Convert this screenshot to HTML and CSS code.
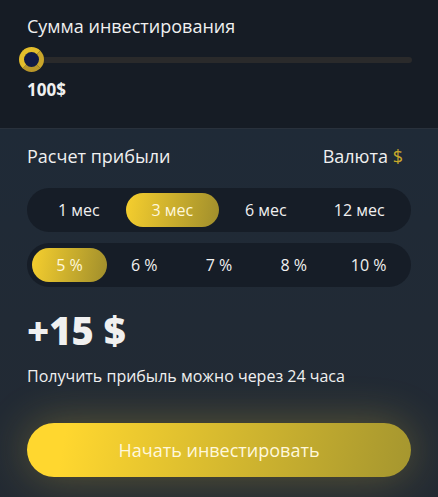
FILE: index.html
```html
<!DOCTYPE html>
<html lang="ru">
<head>
    <meta charset="UTF-8">
    <meta name="viewport" content="width=device-width, initial-scale=1.0">
    <title>Калькулятор</title>
    <link rel="stylesheet" href="styles.css">
</head>
<body>

    <!-- Сумма -->
    <div class="amount">
        <div class="amount-title">Сумма инвестирования</div>
        <div class="slider">
            <div class="slider-track"></div>
            <div class="slider-thumb"></div>
        </div>
        <div class="amount-value">100$</div>
    </div>

    <!-- Расчет -->
    <div class="calc">
        <div class="calc-head">
            <span>Расчет прибыли</span>
            <span>Валюта <span class="gold">$</span></span>
        </div>

        <div class="tabs">
            <div class="tab">1 мес</div>
            <div class="tab active">3 мес</div>
            <div class="tab">6 мес</div>
            <div class="tab">12 мес</div>
        </div>

        <div class="tabs">
            <div class="tab active">5 %</div>
            <div class="tab">6 %</div>
            <div class="tab">7 %</div>
            <div class="tab">8 %</div>
            <div class="tab">10 %</div>
        </div>

        <div class="profit">+15 $</div>
        <div class="profit-note">Получить прибыль можно через 24 часа</div>

        <button class="invest">Начать инвестировать</button>
    </div>

</body>
</html>
```

FILE: styles.css
```css
body {
    font-family: "Open Sans", Arial, sans-serif;
    background-color: #1f2935;
    color: #f0f0f0;
    margin: 0;
    padding: 0;
    width: 438px;
    height: 497px;
    overflow: hidden;
}

/* Top block */
.amount {
    background-color: #161c25;
    height: 129px;
    box-sizing: border-box;
    padding: 14px 27px 0;
    border-bottom: 1px solid #29313c;
}

.amount-title {
    font-size: 18px;
    line-height: 24px;
}

.slider {
    position: relative;
    height: 25px;
    margin: 9px 0 0 -8px;
    width: 393px;
    display: flex;
    align-items: center;
}

.slider-track {
    width: 100%;
    height: 6px;
    border-radius: 3px;
    background-color: #2a2a2b;
}

.slider-thumb {
    position: absolute;
    left: 0;
    top: 0;
    width: 15px;
    height: 15px;
    border-radius: 50%;
    border: 5px solid #e3bd2c;
    border-right-color: #c9a52a;
    border-bottom-color: #b8962a;
    background-color: #121a44;
}

.amount-value {
    font-size: 17px;
    font-weight: bold;
    line-height: 22px;
    margin-top: 7px;
}

/* Calc block */
.calc {
    padding: 15px 27px 0;
    background: linear-gradient(#1f2a37, #232a33);
    height: 368px;
}

.calc-head {
    display: flex;
    justify-content: space-between;
    font-size: 18px;
    line-height: 24px;
    padding-right: 8px;
}

.gold {
    color: #c9a92c;
}

.tabs {
    display: flex;
    background-color: #161d27;
    border-radius: 22px;
    height: 44px;
    box-sizing: border-box;
    padding: 5px;
    margin-top: 20px;
}

.tabs + .tabs {
    margin-top: 11px;
}

.tab {
    flex: 1;
    display: flex;
    align-items: center;
    justify-content: center;
    font-size: 16px;
    border-radius: 18px;
}

.tab.active {
    background: linear-gradient(100deg, #f6cf2e, #a08e2c);
    color: #fff8dc;
}

.profit {
    font-size: 38px;
    font-weight: 800;
    line-height: 44px;
    margin-top: 21px;
}

.profit-note {
    font-size: 16px;
    margin-top: 13px;
}

.invest {
    display: block;
    width: 100%;
    height: 54px;
    margin-top: 36px;
    border: none;
    border-radius: 27px;
    background: linear-gradient(100deg, #ffd72f 10%, #a5962f);
    box-shadow: 0 0 45px rgba(235, 200, 60, 0.3);
    color: #fff8dc;
    font-family: "Open Sans", Arial, sans-serif;
    font-size: 18px;
    cursor: pointer;
}
```
